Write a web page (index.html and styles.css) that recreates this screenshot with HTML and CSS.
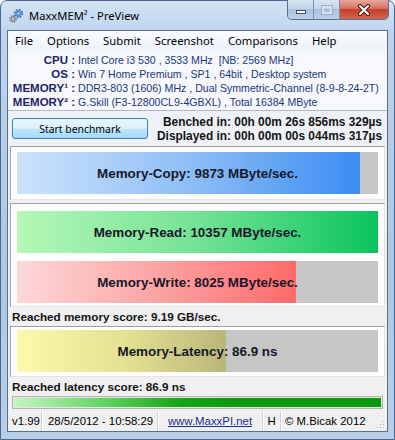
FILE: index.html
```html
<!DOCTYPE html>
<html lang="en">
<head>
    <meta charset="UTF-8">
    <meta name="viewport" content="width=device-width, initial-scale=1.0">
    <title>MaxxMEM² - PreView</title>
    <link rel="stylesheet" href="styles.css">
</head>
<body>
    <div class="window">
        <div class="titlebar">
            <svg class="app-icon" width="16" height="16" viewBox="0 0 16 16">
                <circle cx="10.5" cy="5.5" r="3.6" fill="none" stroke="#3d6fb8" stroke-width="2.2" stroke-dasharray="1.6 1.2"/>
                <circle cx="10.5" cy="5.5" r="3" fill="#5a8fd6"/>
                <circle cx="10.5" cy="5.5" r="1.1" fill="#dfe9f6"/>
                <circle cx="5" cy="11" r="2.9" fill="none" stroke="#6b7380" stroke-width="1.8" stroke-dasharray="1.3 1"/>
                <circle cx="5" cy="11" r="2.3" fill="#8a929e"/>
                <circle cx="5" cy="11" r="0.9" fill="#e6e9ee"/>
            </svg>
            <span class="title">MaxxMEM² - PreView</span>
            <div class="caption-buttons">
                <div class="cap cap-min"><span class="glyph-min"></span></div>
                <div class="cap cap-max"><span class="glyph-max"></span></div>
                <div class="cap cap-close">
                    <svg width="14" height="12" viewBox="0 0 14 12">
                        <path d="M3 2 L11 10 M11 2 L3 10" stroke="#4a1a14" stroke-width="4" stroke-linecap="round"/>
                        <path d="M3 2 L11 10 M11 2 L3 10" stroke="#ffffff" stroke-width="2" stroke-linecap="round"/>
                    </svg>
                </div>
            </div>
        </div>

        <div class="client">
            <div class="menubar">
                <span class="menu-item">File</span>
                <span class="menu-item">Options</span>
                <span class="menu-item">Submit</span>
                <span class="menu-item">Screenshot</span>
                <span class="menu-item">Comparisons</span>
                <span class="menu-item">Help</span>
            </div>

            <div class="info">
                <div class="info-label">CPU :</div>
                <div class="info-value">Intel Core i3 530 , 3533 MHz&nbsp; [NB: 2569 MHz]</div>
                <div class="info-label">OS :</div>
                <div class="info-value">Win 7 Home Premium , SP1 , 64bit , Desktop system</div>
                <div class="info-label">MEMORY¹ :</div>
                <div class="info-value">DDR3-803 (1606) MHz , Dual Symmetric-Channel (8-9-8-24-2T)</div>
                <div class="info-label">MEMORY² :</div>
                <div class="info-value">G.Skill (F3-12800CL9-4GBXL) , Total 16384 MByte</div>
            </div>

            <div class="actions">
                <button type="button" class="start-btn">Start benchmark</button>
                <div class="times">
                    <div>Benched in: 00h 00m 26s 856ms 329µs</div>
                    <div>Displayed in: 00h 00m 00s 044ms 317µs</div>
                </div>
            </div>

            <div class="panel panel-copy">
                <div class="bar bar-blue" style="background-size: 95% 100%">Memory-Copy: 9873 MByte/sec.</div>
            </div>

            <div class="panel panel-rw">
                <div class="bar bar-green" style="background-size: 100% 100%">Memory-Read: 10357 MByte/sec.</div>
                <div class="bar bar-red" style="background-size: 77.3% 100%">Memory-Write: 8025 MByte/sec.</div>
            </div>

            <div class="score score-mem">Reached memory score: 9.19 GB/sec.</div>

            <div class="panel panel-lat">
                <div class="bar bar-yellow" style="background-size: 57.9% 100%">Memory-Latency: 86.9 ns</div>
            </div>

            <div class="score score-lat">Reached latency score: 86.9 ns</div>

            <div class="progress"><div class="progress-fill"></div></div>

            <div class="statusbar">
                <div class="status-item st-ver">v1.99</div>
                <div class="status-item st-date">28/5/2012 - 10:58:29</div>
                <div class="status-item st-link"><a href="#">www.MaxxPI.net</a></div>
                <div class="status-item st-h">H</div>
                <div class="status-item st-copy">© M.Bicak 2012</div>
                <div class="grip">
                    <svg width="8" height="8" viewBox="0 0 8 8">
                        <rect x="6" y="0" width="1" height="1" fill="#b8b8b8"/>
                        <rect x="3" y="3" width="1" height="1" fill="#b8b8b8"/>
                        <rect x="6" y="3" width="1" height="1" fill="#b8b8b8"/>
                        <rect x="0" y="6" width="1" height="1" fill="#b8b8b8"/>
                        <rect x="3" y="6" width="1" height="1" fill="#b8b8b8"/>
                        <rect x="6" y="6" width="1" height="1" fill="#b8b8b8"/>
                    </svg>
                </div>
            </div>
        </div>
    </div>
</body>
</html>
```

FILE: styles.css
```css
* {
    box-sizing: border-box;
}
body {
    margin: 0;
    background: #ffffff;
    font-family: "Liberation Sans", Arial, sans-serif;
}
.window {
    width: 395px;
    height: 440px;
    display: flex;
    flex-direction: column;
    border: 1px solid #4a6790;
    border-radius: 7px 7px 0 0;
    background: linear-gradient(180deg, #d3e3f5 0%, #bdd3ec 8%, #aec7e5 60%, #b8cee8 100%);
    padding: 0 6px 7px 6px;
}

/* title bar */
.titlebar {
    height: 29px;
    display: flex;
    align-items: center;
    position: relative;
}
.app-icon {
    margin-left: 1px;
    margin-top: 1px;
}
.title {
    margin-left: 5px;
    font-family: "Noto Sans", "Open Sans", sans-serif;
    font-size: 11.2px;
    color: #000;
}
.caption-buttons {
    position: absolute;
    top: -1px;
    right: -1px;
    display: flex;
    height: 20px;
    border: 1px solid #5b6f8e;
    border-top: none;
    border-radius: 0 0 5px 5px;
    overflow: hidden;
}
.cap {
    height: 100%;
    display: flex;
    align-items: center;
    justify-content: center;
}
.cap-min,
.cap-max {
    width: 26px;
    background: linear-gradient(180deg, #d9e5f3 0%, #c3d5ea 45%, #a9c0dd 50%, #bcd0e8 100%);
    border-right: 1px solid #7d90ab;
}
.cap-min {
    border-radius: 0 0 0 4px;
}
.glyph-min {
    width: 10px;
    height: 4px;
    background: #fff;
    border: 1px solid #40506a;
    margin-top: 4px;
}
.glyph-max {
    width: 10px;
    height: 8px;
    border: 2px solid #d6e2f0;
    outline: 1px solid #9db0c8;
}
.cap-close {
    width: 48px;
    background: linear-gradient(180deg, #e6a79c 0%, #d7705f 45%, #c4402b 50%, #d2654c 100%);
    border-radius: 0 0 4px 0;
}

/* client area */
.client {
    flex: 1;
    display: flex;
    flex-direction: column;
    border: 1px solid #55708f;
    background: #f0f0f0;
}
.menubar {
    height: 18px;
    display: flex;
    align-items: center;
    background: linear-gradient(180deg, #fbfcfe 0%, #eef3fa 100%);
}
.menu-item {
    padding: 0 7px;
    font-family: "Noto Sans", "Open Sans", sans-serif;
    font-size: 11.3px;
    color: #000;
}

.info {
    height: 62px;
    display: grid;
    grid-template-columns: 67px 1fr;
    column-gap: 3px;
    align-content: start;
    padding-top: 4px;
    background: #f6f8fb;
    border-bottom: 1px solid #b4b8bf;
    line-height: 14px;
}
.info-label {
    text-align: right;
    font-size: 11.5px;
    font-weight: bold;
    color: #1e1e6a;
    white-space: nowrap;
}
.info-value {
    font-size: 10.6px;
    color: #1d3680;
    white-space: nowrap;
}

.actions {
    height: 35px;
    display: flex;
    justify-content: space-between;
    align-items: flex-start;
    padding: 0 5px 0 4px;
    background: #eef1f5;
}
.start-btn {
    margin-top: 7px;
    width: 136px;
    height: 21px;
    border: 1px solid #3c7fb1;
    border-radius: 3px;
    background: linear-gradient(180deg, #eaf6fd 0%, #d9f0fc 50%, #bee6fd 51%, #a7d9f5 100%);
    font-family: "Noto Sans", "Open Sans", sans-serif;
    font-size: 10.4px;
    color: #000;
    padding: 0;
}
.times {
    margin-top: 4px;
    text-align: right;
    font-size: 11.9px;
    line-height: 14px;
    font-weight: bold;
    color: #151515;
}

/* result panels */
.panel {
    margin: 0 2px;
    background: #ffffff;
    border-top: 1px solid #a0a0a0;
    border-left: 1px solid #a0a0a0;
    border-right: 1px solid #e4e4e4;
    border-bottom: 1px solid #e4e4e4;
    display: flex;
    flex-direction: column;
    gap: 8px;
}
.panel-copy {
    padding: 5px 6px 5px 6px;
    margin-bottom: 3px;
}
.panel-rw {
    padding: 7px 6px 3px 6px;
}
.panel-lat {
    padding: 3px 6px 4px 6px;
}
.bar {
    height: 42px;
    display: flex;
    align-items: center;
    justify-content: center;
    background-color: #c6c6c6;
    background-repeat: no-repeat;
    font-size: 13.4px;
    font-weight: bold;
    color: #18182a;
}
.bar-blue {
    background-image: linear-gradient(90deg, #cde3fb 0%, #8fbef5 50%, #3a8df3 100%);
}
.bar-green {
    background-image: linear-gradient(90deg, #b5f8b6 0%, #74e296 50%, #0ac55d 100%);
}
.bar-red {
    background-image: linear-gradient(90deg, #fdd9d9 0%, #fca4a4 50%, #ff6a6a 100%);
}
.bar-yellow {
    background-image: linear-gradient(90deg, #fcf9ad 0%, #e6e293 50%, #bab67b 100%);
}

.score {
    padding-left: 4px;
    font-size: 11.7px;
    font-weight: bold;
    color: #151515;
}
.score-mem {
    height: 19px;
    line-height: 19px;
}
.score-lat {
    height: 18px;
    line-height: 19px;
}

.progress {
    margin: 1px 4px 0 4px;
    height: 13px;
    border: 1px solid #b2b2b2;
    background: #e6e6e6;
    padding: 1px;
}
.progress-fill {
    height: 100%;
    background: linear-gradient(90deg, #c3f5c3 0%, #5fd35f 25%, #18a418 45%, #0a990a 60%, #0a990a 100%);
}

/* status bar */
.statusbar {
    flex: 1;
    display: flex;
    align-items: stretch;
    font-size: 11.4px;
    color: #000;
    padding-top: 2px;
}
.status-item {
    display: flex;
    align-items: center;
    border-right: 1px solid #d2d2d2;
    box-shadow: 1px 0 0 #ffffff;
    white-space: nowrap;
}
.st-ver {
    width: 34px;
    padding-left: 4px;
}
.st-date {
    width: 116px;
    padding-left: 6px;
}
.st-link {
    width: 105px;
    justify-content: center;
}
.st-link a {
    color: #1b2d8c;
    text-decoration: underline;
}
.st-h {
    width: 18px;
    justify-content: center;
}
.st-copy {
    width: 95px;
    padding-left: 4px;
    border-right: none;
    box-shadow: none;
}
.grip {
    flex: 1;
    display: flex;
    align-items: flex-end;
    justify-content: flex-end;
    padding: 0 2px 2px 0;
}
```
